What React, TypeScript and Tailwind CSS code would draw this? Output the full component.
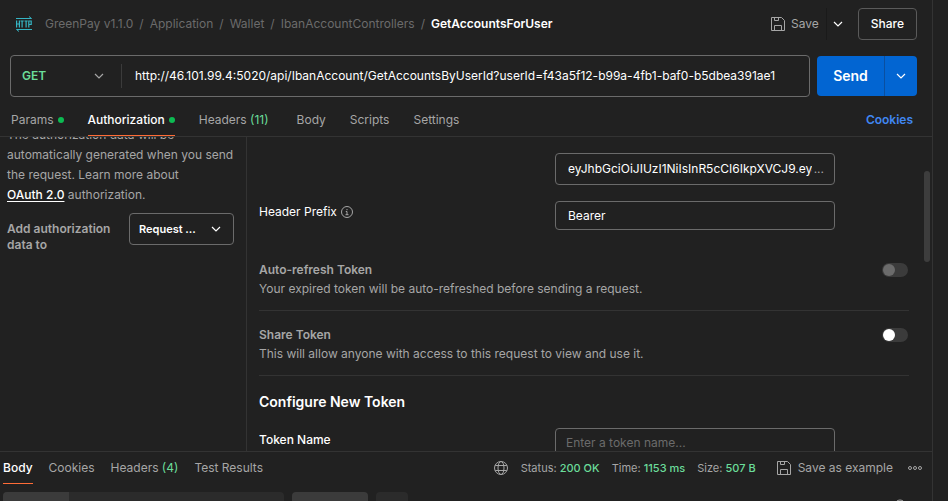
import React from "react";

const crumbs = ["GreenPay v1.1.0", "Application", "Wallet", "IbanAccountControllers"];

function Chevron({ className = "" }: { className?: string }) {
  return (
    <svg className={className} width="10" height="6" viewBox="0 0 10 6" fill="none" stroke="currentColor" aria-hidden="true">
      <path d="M1 1l4 4 4-4" strokeWidth="1.2" />
    </svg>
  );
}

function HttpIcon() {
  return (
    <svg width="16" height="16" viewBox="0 0 16 16" fill="none" stroke="#35b5c4" aria-hidden="true">
      <path d="M0 2.500h15.500L13 0.500M16 13.500H0.500L3 15.500" />
      <path d="M0.600 4.500v7M3.400 4.500v7M0.600 8h2.800M4.500 5h3.200M6.100 5v6.500M8.500 5h3.200M10.100 5v6.500M12.800 11.500V5h2.400v3.500h-2.400" strokeWidth="1.200" />
    </svg>
  );
}

function SaveIcon() {
  return (
    <svg width="14" height="14" viewBox="0 0 14 14" fill="none" stroke="#a6a6a6" aria-hidden="true">
      <path d="M0.500 0.500h10l3 3v10h-13zM3.500 0.500v3h4v-3M3.500 13.500v-5h7v5" />
    </svg>
  );
}

function GlobeIcon() {
  return (
    <svg width="14" height="14" viewBox="0 0 14 14" fill="none" stroke="#a6a6a6" aria-hidden="true">
      <circle cx="7" cy="7" r="6.500" />
      <ellipse cx="7" cy="7" rx="3" ry="6.500" />
      <path d="M1.200 4.500h11.600M1.200 9.500h11.600" />
    </svg>
  );
}

function InfoIcon() {
  return (
    <svg width="12" height="12" viewBox="0 0 12 12" fill="none" stroke="#a6a6a6" aria-hidden="true">
      <circle cx="6" cy="6" r="5.500" />
      <path d="M6 3v1.200M4.800 5.500H6V9M4.500 8.700h3" />
    </svg>
  );
}

function SearchIcon() {
  return (
    <svg width="14" height="14" viewBox="0 0 14 14" fill="none" stroke="#a6a6a6" aria-hidden="true">
      <circle cx="6" cy="6" r="5" />
      <path d="M9.500 9.500l4 4" />
    </svg>
  );
}

function Dot() {
  return <span className="size-1.5 rounded-full bg-[#0cbb52]" />;
}

function Setting({ id, title, text, disabled = false }: { id: string; title: string; text: string; disabled?: boolean }) {
  return (
    <div className="flex h-[65px] items-start justify-between border-b border-[#333] pt-3.5">
      <label htmlFor={id} className="leading-[19px] text-[#a6a6a6]">
        <span className="block font-semibold">{title}</span>
        <span className="block">{text}</span>
      </label>
      <input
        id={id}
        type="checkbox"
        role="switch"
        disabled={disabled}
        className="mr-px mt-[3px] h-[14px] w-[26px] shrink-0 appearance-none rounded-full bg-[#3b3b3b] p-px before:block before:size-3 before:rounded-full before:bg-white disabled:before:bg-[#6b6b6b]"
      />
    </div>
  );
}

export default function App() {
  return (
    <div className="flex h-screen overflow-hidden bg-[#212121] font-['Inter',sans-serif] text-xs leading-5 text-[#a6a6a6]">
      <main className="flex min-w-0 flex-1 flex-col border-r border-[#333]">
        <header className="flex h-12 shrink-0 items-center pl-4 pr-[15px]">
          <HttpIcon />
          <nav aria-label="Breadcrumb" className="ml-[13px] flex flex-1 items-center gap-1.5 text-[#6b6b6b]">
            {crumbs.map((c) => (
              <React.Fragment key={c}>
                <a href="#">{c}</a>
                <span>/</span>
              </React.Fragment>
            ))}
            <h1 className="font-semibold text-white">GetAccountsForUser</h1>
          </nav>
          <button className="flex items-center gap-1.5 pr-[7px]">
            <SaveIcon />
            Save
          </button>
          <button aria-label="Save options" className="flex h-8 w-6 items-center justify-center border-l border-[#1a1a1a] text-white">
            <Chevron />
          </button>
          <button className="ml-2 h-8 rounded border border-[#5a5a5a] px-3 font-medium text-white">Share</button>
        </header>

        <form className="mt-[7px] flex shrink-0 items-center gap-[7px] pl-2.5 pr-[15px]" onSubmit={(e) => e.preventDefault()}>
          <div className="flex h-[42px] flex-1 items-center rounded border border-[#6b6b6b]">
            <div className="grid h-6 w-[111px] items-center border-r border-[#3b3b3b]">
              <select aria-label="Method" className="col-start-1 row-start-1 appearance-none bg-transparent pl-[11px] font-semibold text-[#6bdd9a] outline-none">
                <option>GET</option>
              </select>
              <Chevron className="pointer-events-none col-start-1 row-start-1 mr-[17px] justify-self-end" />
            </div>
            <input
              aria-label="Request URL"
              className="min-w-0 flex-1 bg-transparent px-[13px] text-white outline-none"
              defaultValue="http://46.101.99.4:5020/api/IbanAccount/GetAccountsByUserId?userId=f43a5f12-b99a-4fb1-baf0-b5dbea391ae1"
            />
          </div>
          <div className="flex h-10 overflow-hidden rounded bg-[#0265d2] text-white">
            <button className="w-[67px] text-sm font-semibold">Send</button>
            <button aria-label="Send options" className="flex w-[33px] items-center justify-center border-l border-[#0a4fa0]">
              <Chevron />
            </button>
          </div>
        </form>

        <nav aria-label="Request" className="flex h-10 shrink-0 items-end border-b border-[#333] pl-[11px] pr-[19px]">
          <button className="mr-6 flex h-8 items-center gap-1">Params<Dot /></button>
          <button className="mr-6 flex h-8 items-center gap-1 border-b border-[#ff6c37] pt-px font-medium text-white">Authorization<Dot /></button>
          <button className="mr-7 h-8">Headers <span className="text-[#6bdd9a]">(11)</span></button>
          <button className="mr-6 h-8">Body</button>
          <button className="mr-6 h-8">Scripts</button>
          <button className="h-8">Settings</button>
          <a href="#" className="ml-auto flex h-8 items-center font-semibold text-[#4087f2]">Cookies</a>
        </nav>

        <div className="flex min-h-0 flex-1">
          <aside className="w-[247px] shrink-0 overflow-hidden border-r border-[#333] pl-[7px] pr-3">
            <p className="-mt-3">
              The authorization data will be automatically generated when you send the request. Learn more about{" "}
              <a href="#" className="whitespace-nowrap font-medium text-white underline underline-offset-2">OAuth 2.0</a> authorization.
            </p>
            <div className="mt-2 flex items-start justify-between">
              <label htmlFor="add-to" className="w-[110px] pt-2 font-semibold leading-4">Add authorization data to</label>
              <div className="grid h-8 w-[105px] items-center rounded border border-[#6b6b6b] text-white">
                <select id="add-to" className="col-start-1 row-start-1 appearance-none bg-transparent pl-[9px] text-[11px] font-semibold outline-none">
                  <option>Request ...</option>
                </select>
                <Chevron className="pointer-events-none col-start-1 row-start-1 mr-3 justify-self-end" />
              </div>
            </div>
          </aside>

          <section className="min-w-0 flex-1 overflow-hidden pl-3 pr-[15px] pt-4 text-white">
            <div className="grid grid-cols-[296px_280px] items-start gap-y-4">
              <div className="col-start-2 flex h-8 items-center gap-0.5 rounded border border-[#6b6b6b] pl-3 pr-2.5">
                <input
                  aria-label="Token"
                  className="min-w-0 flex-1 bg-transparent outline-none"
                  defaultValue="eyJhbGciOiJIUzI1NiIsInR5cCI6IkpXVCJ9.eyJ1c2VySWQiOiI"
                />
                <span className="text-[#a6a6a6]">...</span>
              </div>
              <label htmlFor="prefix" className="flex h-[22px] items-center gap-1">Header Prefix <InfoIcon /></label>
              <input id="prefix" defaultValue="Bearer" className="h-[29px] rounded border border-[#6b6b6b] bg-transparent px-3 outline-none" />
            </div>
            <div className="mt-4">
              <Setting id="auto-refresh" title="Auto-refresh Token" text="Your expired token will be auto-refreshed before sending a request." disabled />
              <Setting id="share-token" title="Share Token" text="This will allow anyone with access to this request to view and use it." />
            </div>
            <h2 className="mt-4 text-sm font-semibold">Configure New Token</h2>
            <div className="mt-4 grid grid-cols-[296px_280px] items-start">
              <label htmlFor="token-name" className="pt-0.5 font-medium">Token Name</label>
              <input id="token-name" placeholder="Enter a token name..." className="h-[29px] rounded border border-[#6b6b6b] bg-transparent px-2.5 outline-none placeholder:text-[#6b6b6b]" />
            </div>
          </section>
          <div className="mr-0.5 mt-[34px] h-[91px] w-1.5 shrink-0 rounded-full bg-[#3d3d3d]" />
        </div>

        <footer className="h-[50px] shrink-0 overflow-hidden border-t border-[#333]">
          <div className="flex items-start pl-[3px] pr-2.5">
            <button className="h-8 border-b border-[#ff6c37] font-medium text-white">Body</button>
            <button className="ml-4 h-8">Cookies</button>
            <button className="ml-4 h-8">Headers <span className="text-[#6bdd9a]">(4)</span></button>
            <button className="ml-4 h-8">Test Results</button>
            <div className="ml-auto flex h-8 items-center text-[11px]">
              <GlobeIcon />
              <span className="ml-[13px]">Status: <span className="font-medium text-[#6bdd9a]">200 OK</span></span>
              <span className="ml-3">Time: <span className="font-medium text-[#6bdd9a]">1153 ms</span></span>
              <span className="ml-3">Size: <span className="font-medium text-[#6bdd9a]">507 B</span></span>
              <button className="ml-[21px] flex items-center gap-[7px] text-xs"><SaveIcon />Save as example</button>
              <button aria-label="More" className="ml-[15px]">
                <svg width="14" height="4" viewBox="0 0 14 4" fill="none" stroke="#a6a6a6" aria-hidden="true">
                  <circle cx="2" cy="2" r="1.500" /><circle cx="7" cy="2" r="1.500" /><circle cx="12" cy="2" r="1.500" />
                </svg>
              </button>
            </div>
          </div>
          <div className="mt-2 flex items-start gap-2 pl-[3px] pr-6">
            <div className="flex h-8 w-[281px] overflow-hidden rounded bg-[#2b2b2b]"><div className="w-[66px] bg-[#3b3b3b]" /></div>
            <div className="h-8 w-[76px] rounded bg-[#3b3b3b]" />
            <div className="h-8 w-8 rounded bg-[#2b2b2b]" />
            <button aria-label="Search response" className="ml-auto pt-[7px]"><SearchIcon /></button>
          </div>
        </footer>
      </main>
      <div className="w-[15px] shrink-0" />
    </div>
  );
}
